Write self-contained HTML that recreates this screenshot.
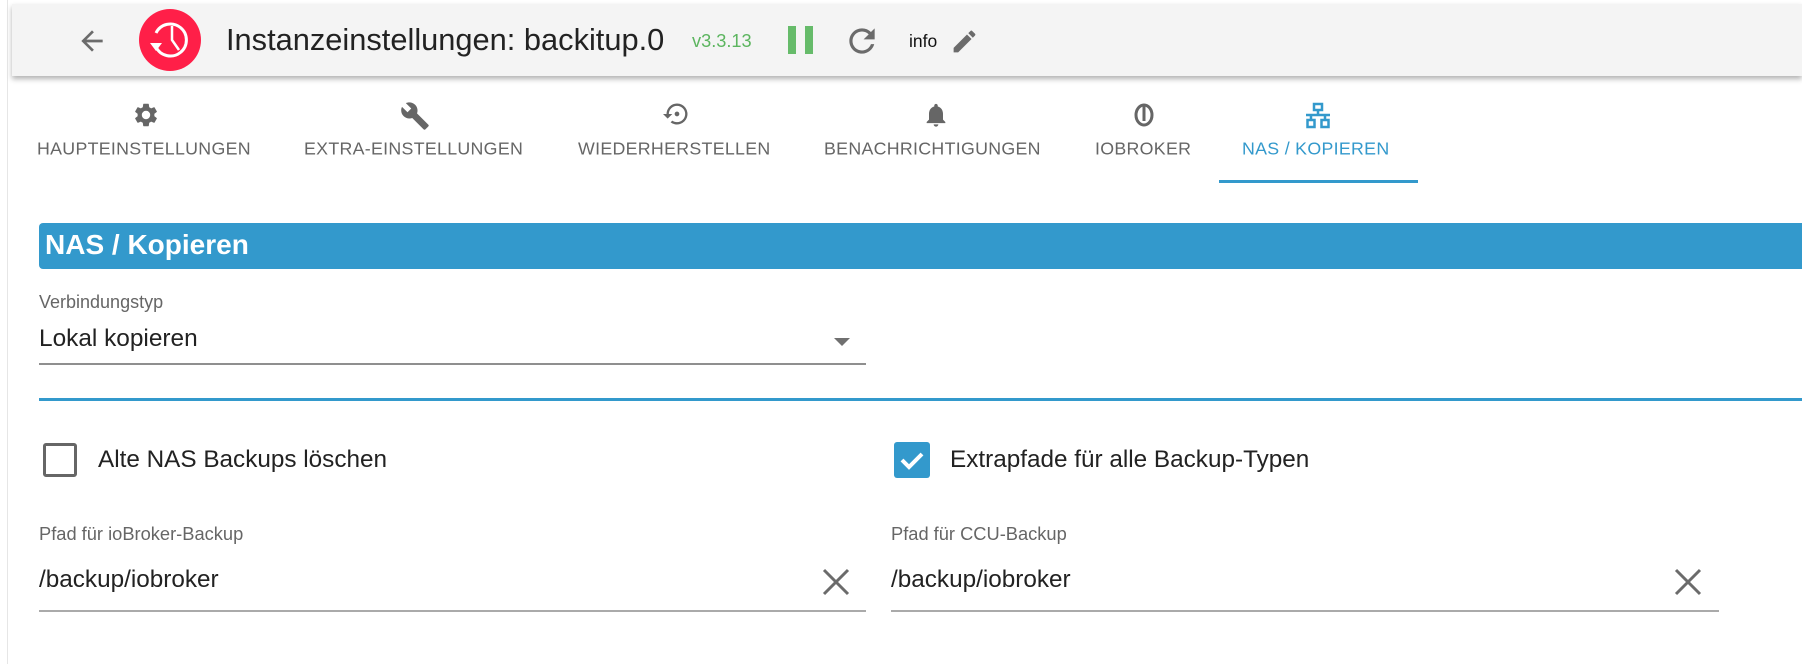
<!DOCTYPE html>
<html><head><meta charset="utf-8"><style>
*{margin:0;padding:0;box-sizing:border-box}
body{width:1802px;height:664px;background:#fff;font-family:"Liberation Sans",Arial,sans-serif;position:relative;overflow:hidden;color:#222}
.a{position:absolute;white-space:nowrap}
.hdr{left:12px;top:4px;width:1790px;height:72px;background:#f4f4f4;box-shadow:0 3px 5px rgba(0,0,0,.3)}
.vl{left:7px;top:0;width:1px;height:664px;background:#e6e6e6}
.tab{position:absolute;top:149px;transform:translateY(-50%);font-size:17.8px;color:#666;letter-spacing:.3px;white-space:nowrap}
.ic{position:absolute;top:101px}
</style></head><body>
<div class="a vl"></div>
<div class="a hdr"></div>
<svg class="a" style="left:74px;top:25px" width="36" height="32" viewBox="0 0 24 24"><path d="M20 11H7.830l5.59-5.59L12 4l-8 8 8 8 1.41-1.41L7.83 13H20v-2z" fill="#6b6b6b"/></svg>
<svg class="a" style="left:139px;top:9px" width="62" height="62" viewBox="0 0 62 62"><circle cx="31" cy="31" r="31" fill="#ff1f48"/><path d="M17 38 A16 16 0 1 0 17 24" fill="none" stroke="#fff" stroke-width="3"/><path d="M11 34 L17 42 L23 34Z" fill="#fff"/><path d="M33 17 V31 L40 41" fill="none" stroke="#fff" stroke-width="2.5"/></svg>
<div class="a" style="left:226px;top:22px;font-size:30.8px;color:#222">Instanzeinstellungen: backitup.0</div>
<div class="a" style="left:692px;top:31px;font-size:18.2px;color:#5cb55f">v3.3.13</div>
<div class="a" style="left:788px;top:26px;width:8px;height:28px;background:#66bb6a"></div>
<div class="a" style="left:805px;top:26px;width:8px;height:28px;background:#66bb6a"></div>
<svg class="a" style="left:843px;top:22px" width="38" height="38" viewBox="0 0 24 24"><path d="M17.65 6.35A7.958 7.958 0 0012 4c-4.42 0-7.99 3.58-7.99 8s3.57 8 7.99 8c3.73 0 6.84-2.550 7.73-6h-2.08A5.99 5.99 0 0112 18c-3.31 0-6-2.69-6-6s2.69-6 6-6c1.66 0 3.14.69 4.22 1.78L13 11h7V4l-2.35 2.35z" fill="#6b6b6b"/></svg>
<div class="a" style="left:909px;top:31px;font-size:17.5px;color:#111">info</div>
<svg class="a" style="left:950px;top:27px" width="29" height="29" viewBox="0 0 24 24"><path d="M3 17.25V21h3.75L17.81 9.94l-3.75-3.75L3 17.25zM20.71 7.04a1 1 0 000-1.41l-2.34-2.34a1 1 0 00-1.41 0l-1.83 1.83 3.75 3.75 1.83-1.83z" fill="#6b6b6b"/></svg>

<svg class="ic" style="left:132px" width="28" height="28" viewBox="0 0 24 24"><path d="M19.14 12.94c.04-.3.06-.61.06-.94s-.02-.64-.07-.94l2.03-1.58a.49.49 0 00.12-.61l-1.92-3.32a.49.49 0 00-.59-.22l-2.39.96c-.5-.38-1.03-.7-1.62-.94l-.36-2.54a.48.48 0 00-.48-.41h-3.84c-.24 0-.43.17-.47.41l-.36 2.54c-.59.24-1.13.57-1.62.94l-2.39-.96a.48.48 0 00-.59.22L2.74 8.87c-.12.21-.08.47.12.61l2.03 1.58c-.05.3-.09.63-.09.94s.02.64.07.94l-2.03 1.58a.49.49 0 00-.12.61l1.92 3.32c.12.22.37.29.59.22l2.39-.96c.5.38 1.03.7 1.62.94l.36 2.54c.05.24.24.41.48.41h3.84c.24 0 .44-.17.47-.41l.36-2.54c.59-.24 1.13-.56 1.62-.94l2.39.96c.22.08.47 0 .59-.22l1.92-3.32c.12-.22.07-.47-.12-.61l-2.01-1.58zM12 15.6A3.6 3.6 0 1112 8.4a3.6 3.6 0 010 7.2z" fill="#666"/></svg>
<svg class="ic" style="left:400px" width="30" height="30" viewBox="0 0 24 24"><path d="M22.7 19l-9.1-9.1c.9-2.3.4-5-1.5-6.9-2-2-5-2.4-7.4-1.3L9 6 6 9 1.6 4.7C.4 7.1.9 10.1 2.9 12.1c1.9 1.9 4.6 2.4 6.9 1.5l9.1 9.1c.4.4 1 .4 1.4 0l2.3-2.3c.5-.4.5-1.1.1-1.4z" fill="#666"/></svg>
<svg class="ic" style="left:663px;top:100px" width="28" height="28" viewBox="0 0 24 24"><path d="M14 12c0-1.1-.9-2-2-2s-2 .9-2 2 .9 2 2 2 2-.9 2-2zm-2-9a9 9 0 00-9 9H0l4 4 4-4H5a7 7 0 117 7c-1.51 0-2.91-.49-4.06-1.3l-1.42 1.44A9 9 0 1012 3z" fill="#666"/></svg>
<svg class="ic" style="left:922px" width="28" height="28" viewBox="0 0 24 24"><path d="M12 22c1.1 0 2-.9 2-2h-4a2 2 0 002 2zm6-6v-5c0-3.07-1.64-5.64-4.5-6.32V4c0-.83-.67-1.5-1.5-1.5s-1.5.67-1.5 1.5v.68C7.63 5.36 6 7.92 6 11v5l-2 2v1h16v-1l-2-2z" fill="#666"/></svg>
<svg class="ic" style="left:1130px" width="28" height="28" viewBox="0 0 28 28"><ellipse cx="14" cy="14" rx="8" ry="10" fill="none" stroke="#666" stroke-width="3"/><rect x="12.5" y="3" width="3" height="17" fill="#666"/></svg>
<svg class="ic" style="left:1303px" width="30" height="30" viewBox="0 0 30 30" fill="none" stroke="#3399cc" stroke-width="2.5"><rect x="11" y="3" width="8" height="6"/><path d="M15 9v5M3 14h24M8 14v5M22 14v5"/><rect x="4.5" y="19" width="7" height="7"/><rect x="18.5" y="19" width="7" height="7"/></svg>

<div class="tab" style="left:37px">HAUPTEINSTELLUNGEN</div>
<div class="tab" style="left:304px">EXTRA-EINSTELLUNGEN</div>
<div class="tab" style="left:578px">WIEDERHERSTELLEN</div>
<div class="tab" style="left:824px">BENACHRICHTIGUNGEN</div>
<div class="tab" style="left:1095px">IOBROKER</div>
<div class="tab" style="left:1242px;color:#3399cc">NAS / KOPIEREN</div>
<div class="a" style="left:1219px;top:180px;width:199px;height:3px;background:#3399cc"></div>

<div class="a" style="left:39px;top:223px;width:1763px;height:46px;background:#3399cc;border-radius:4px 0 0 4px"></div>
<div class="a" style="left:45px;top:229px;font-size:28px;font-weight:bold;color:#fff">NAS / Kopieren</div>

<div class="a" style="left:39px;top:292px;font-size:18px;color:#666">Verbindungstyp</div>
<div class="a" style="left:39px;top:325px;font-size:24.4px;color:#222">Lokal kopieren</div>
<div class="a" style="left:834px;top:338px;width:0;height:0;border-left:8px solid transparent;border-right:8px solid transparent;border-top:8px solid #707070"></div>
<div class="a" style="left:39px;top:363px;width:827px;height:2px;background:#8f8f8f"></div>
<div class="a" style="left:39px;top:398px;width:1763px;height:3px;background:#3399cc"></div>

<div class="a" style="left:43px;top:443px;width:34px;height:34px;border:3px solid #666;border-radius:3px"></div>
<div class="a" style="left:98px;top:446px;font-size:24.3px;color:#222">Alte NAS Backups löschen</div>
<svg class="a" style="left:894px;top:442px" width="36" height="36" viewBox="0 0 36 36"><rect width="36" height="36" rx="3" fill="#3399cc"/><path d="M8 18l7 7 13-13" fill="none" stroke="#fff" stroke-width="4"/></svg>
<div class="a" style="left:950px;top:446px;font-size:24.3px;color:#222">Extrapfade für alle Backup-Typen</div>

<div class="a" style="left:39px;top:523px;font-size:18.3px;color:#666">Pfad für ioBroker-Backup</div>
<div class="a" style="left:891px;top:523px;font-size:18.3px;color:#666">Pfad für CCU-Backup</div>
<div class="a" style="left:39px;top:566px;font-size:24.3px;color:#222">/backup/iobroker</div>
<div class="a" style="left:891px;top:566px;font-size:24.3px;color:#222">/backup/iobroker</div>
<svg class="a" style="left:822px;top:568px" width="28" height="28" viewBox="0 0 28 28"><path d="M2 2L26 26M26 2L2 26" stroke="#6b6b6b" stroke-width="3"/></svg>
<svg class="a" style="left:1674px;top:568px" width="28" height="28" viewBox="0 0 28 28"><path d="M2 2L26 26M26 2L2 26" stroke="#6b6b6b" stroke-width="3"/></svg>
<div class="a" style="left:39px;top:610px;width:827px;height:2px;background:#aaa"></div>
<div class="a" style="left:891px;top:610px;width:828px;height:2px;background:#aaa"></div>
</body></html>
